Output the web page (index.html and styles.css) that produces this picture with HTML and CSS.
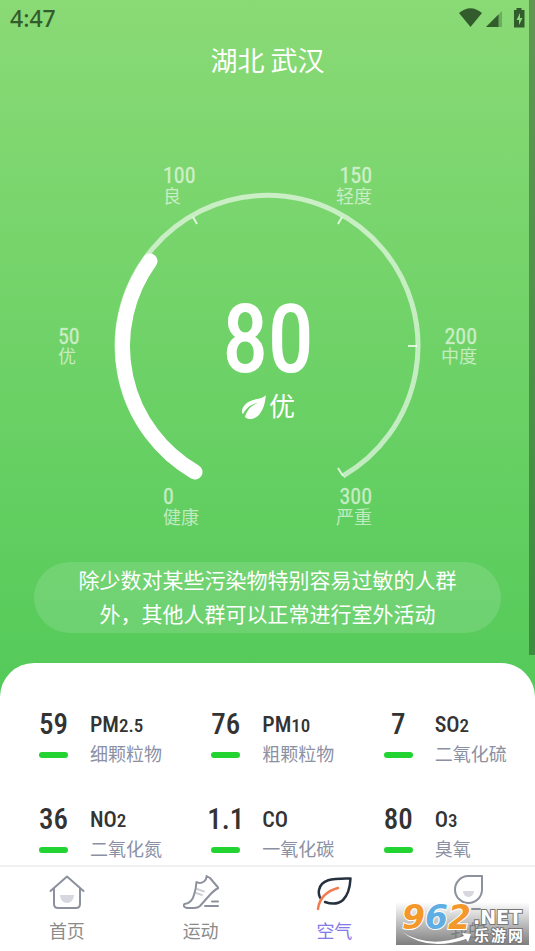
FILE: index.html
```html
<!DOCTYPE html>
<html lang="zh-CN">
<head>
<meta charset="utf-8">
<meta name="viewport" content="width=device-width, initial-scale=1">
<title>空气</title>
<link rel="stylesheet" href="styles.css">
</head>
<body>
<div class="app">
  <div class="status">
    <span class="clock">4:47</span>
    <svg class="status-icons" viewBox="0 0 70 24" aria-hidden="true">
      <path d="M0 6Q11.500-3.500 23 6L11.500 20Z" transform="translate(0 1)"/>
      <path opacity=".35" d="M27 21H43V5Z"/>
      <path d="M27 21H39.500V8.500Z"/>
      <path fill-rule="evenodd" d="M57.500 2H62.500V4H65.500V21.500H55V4H57.500ZM61 7L57.500 14H60V19L63.500 12H61Z"/>
    </svg>
  </div>
  <main class="main">
    <h1 class="city">湖北 武汉</h1>
    <svg class="gauge" viewBox="0 84 535 462" role="img" aria-label="空气质量 80 优">
      <path class="track" d="M192 476A150.500 150.500 0 1 1 343 476"/>
      <g class="ticks">
        <path d="M193 217L197 224M342 217L338 224M417 346H408M338 468L343 476"/>
      </g>
      <path class="progress" d="M195 472A145.500 145.500 0 0 1 150 261"/>
      <g class="scale">
        <text class="mark" x="163" y="183">100</text><text x="163" y="203">良</text>
        <text class="mark end" x="372" y="183">150</text><text class="end" x="372" y="203">轻度</text>
        <text class="mark" x="58" y="344">50</text><text x="58" y="363">优</text>
        <text class="mark end" x="477" y="344">200</text><text class="end" x="477" y="363">中度</text>
        <text class="mark" x="163" y="504">0</text><text x="163" y="524">健康</text>
        <text class="mark end" x="372" y="504">300</text><text class="end" x="372" y="524">严重</text>
      </g>
      <text class="reading" x="268" y="371">80</text>
      <g class="leaf" transform="translate(242 395)">
        <path d="M24 0C20 5 8 3 2 11C-1 15 0 18 1 19C4 14 8 9 16 8C9 10 5 15 3 22C7 26 15 24 19 17C23 11 23 5 24 0Z"/>
      </g>
      <text class="grade" x="269" y="416">优</text>
    </svg>
    <p class="tip">除少数对某些污染物特别容易过敏的人群外，其他人群可以正常进行室外活动</p>
  </main>
  <section class="sheet">
    <div class="item"><div class="value">59</div><div class="name">PM<small>2.5</small></div><i class="bar"></i><div class="label">细颗粒物</div></div>
    <div class="item"><div class="value">76</div><div class="name">PM<small>10</small></div><i class="bar"></i><div class="label">粗颗粒物</div></div>
    <div class="item"><div class="value">7</div><div class="name">SO<small>2</small></div><i class="bar"></i><div class="label">二氧化硫</div></div>
    <div class="item"><div class="value">36</div><div class="name">NO<small>2</small></div><i class="bar"></i><div class="label">二氧化氮</div></div>
    <div class="item"><div class="value">1.1</div><div class="name">CO</div><i class="bar"></i><div class="label">一氧化碳</div></div>
    <div class="item"><div class="value">80</div><div class="name">O<small>3</small></div><i class="bar"></i><div class="label">臭氧</div></div>
  </section>
  <nav class="nav">
    <a class="tab" href="#home">
      <svg class="icon" viewBox="0 0 36 36" aria-hidden="true"><path class="shade" d="M11 20H25A7 8 0 0 1 11 20Z"/><path d="M1.500 16L18 1.500L34.500 16M5 13.500V29Q5 33 9 33H27Q31 33 31 29V13.500"/></svg>
      <span>首页</span>
    </a>
    <a class="tab" href="#sport">
      <svg class="icon" viewBox="0 0 36 36" aria-hidden="true"><path class="shade-line" d="M14 14L21 16.500M13 18L19 20"/><path d="M13.500 7Q17 9 21 6.500Q24 4 23.500 1L27 3L35.500 13Q31 15 25 22L17 31Q15 33 11 33H4Q-1 31.500 1.500 29Q9 28 11 20Q13 14 13.500 7ZM22 31H35M29 26.500H35"/></svg>
      <span>运动</span>
    </a>
    <a class="tab active" href="#air" aria-current="page">
      <svg class="icon" viewBox="0 0 36 36" aria-hidden="true"><path class="dark" d="M5 24Q2 20 3 15C5 5 15 3 34.500 3.500C34 13 32 20 27 25Q20 31 9 27"/><path class="orange" d="M2 34Q4 18 22 13"/></svg>
      <span>空气</span>
    </a>
    <a class="tab" href="#mine">
      <svg class="icon" viewBox="0 0 36 36" aria-hidden="true"><path class="shade" d="M13 16H24A5.500 6 0 0 1 13 16Z"/><path d="M32 1H18A13.500 13.500 0 1 0 32 15V1ZM22 34H30"/></svg>
      <span>我的</span>
    </a>
  </nav>
  <div class="scroll-shade"></div>
  <svg class="watermark" viewBox="0 0 133 48" role="img" aria-label="962.NET 乐游网">
    <defs>
      <linearGradient id="shade" x1="0" y1="0" x2="0" y2="1"><stop offset="0" stop-color="#777" stop-opacity="0"/><stop offset="1" stop-color="#777" stop-opacity=".95"/></linearGradient>
    </defs>
    <path fill="url(#shade)" d="M0 5H133V48H0Z"/>
    <path class="swoosh" d="M6 35Q33 52 68 39L66 36L75 37L72 45L70 42Q32 55 6 35Z"/>
    <g class="digits"><text class="gold" x="6" y="32">9</text><text class="blue" x="29" y="32">6</text><text class="gold" x="52" y="32">2</text></g>
    <text class="net" x="77" y="27">.NET</text>
    <text class="site" x="78" y="44">乐</text><text class="site" x="95" y="44">游</text><text class="site" x="112" y="44">网</text>
  </svg>
</div>
</body>
</html>
```
FILE: styles.css
```css
* { box-sizing: border-box; }
body {
  margin: 0;
  font-family: Roboto, "Noto Sans CJK SC", sans-serif;
  background: #fff;
}
.app {
  position: relative;
  display: flex;
  flex-direction: column;
  min-height: 100vh;
  background: linear-gradient(#8ada76, #53ca59 700px);
}
.status {
  display: flex;
  justify-content: space-between;
  align-items: center;
  height: 36px;
  padding: 0 10px;
  color: #335c2c;
}
.clock { font-size: 23px; line-height: 36px; font-family: "Noto Sans", sans-serif; font-weight: 500; }
.status-icons { width: 70px; height: 24px; fill: #335c2c; margin-right: -4px; }
.main { display: flex; flex-direction: column; padding-bottom: 30px; }
.city {
  margin: 0;
  font-size: 27px;
  line-height: 48px;
  font-weight: 400;
  text-align: center;
  color: #fff;
  font-family: "Noto Sans CJK SC", sans-serif;
}
.gauge { display: block; width: 100%; fill: #fff; }
.track { fill: none; stroke: #fff; stroke-opacity: .6; stroke-width: 5; }
.ticks { fill: none; stroke: #fff; stroke-opacity: .75; stroke-width: 2; }
.progress { fill: none; stroke: #fff; stroke-width: 15; stroke-linecap: round; }
.scale { fill: #fff; fill-opacity: .6; font-size: 18px; font-family: "Noto Sans CJK SC", sans-serif; }
.mark, .reading, .value, .name { font-family: "Roboto Condensed", "Noto Sans CJK SC", sans-serif; }
.mark { font-size: 22px; font-weight: 400; stroke: #fff; stroke-opacity: .2; }
.end { text-anchor: end; }
.reading { font-size: 92px; font-weight: 400; text-anchor: middle; stroke: #fff; stroke-width: 2; stroke-linejoin: round; }
.grade { font-size: 26px; font-family: "Noto Sans CJK SC", sans-serif; }
.tip {
  margin: 16px 34px 0;
  padding: 0 40px 3px;
  border-radius: 36px;
  background: rgba(255, 255, 255, .13);
  color: #fff;
  font-size: 21px;
  line-height: 34px;
  text-align: center;
  font-family: "Noto Sans CJK SC", sans-serif;
}
.sheet {
  flex: 1;
  display: grid;
  grid-template-columns: repeat(3, 1fr);
  grid-auto-rows: 55px;
  row-gap: 40px;
  padding: 45px 9px 0;
  border-radius: 34px 34px 0 0;
  background: #fff;
}
.item {
  display: grid;
  grid-template-columns: 35px 1fr;
  grid-template-rows: 33px 24px;
  column-gap: 19px;
  align-items: center;
  padding-left: 27px;
  white-space: nowrap;
}
.value, .name { color: #333; line-height: 31px; font-weight: 500; }
.value { display: flex; justify-content: center; font-size: 29px; }
.name { font-size: 22px; }
.name small { font-size: 19px; }
.bar { justify-self: center; width: 29px; height: 6px; margin-top: 3px; border-radius: 3px; background: #23d331; }
.label { font-size: 18px; line-height: 24px; color: #8b90a3; font-family: "Noto Sans CJK SC", sans-serif; }
.nav {
  display: grid;
  grid-template-columns: repeat(4, 1fr);
  height: 86px;
  padding-top: 8px;
  border-top: 2px solid #f0f0f1;
  background: #fff;
}
.tab {
  display: flex;
  flex-direction: column;
  align-items: center;
  color: #8b8b8b;
  font-size: 18px;
  line-height: 38px;
  text-decoration: none;
  font-family: "Noto Sans CJK SC", sans-serif;
}
.active { color: #8379e8; }
.icon { width: 36px; height: 36px; fill: none; stroke: #8d919e; stroke-width: 2; stroke-linecap: round; stroke-linejoin: round; }
.icon .shade { fill: #d6d7df; stroke: none; }
.icon .shade-line { stroke: #d0d1d8; }
.icon .dark { stroke: #26313f; stroke-width: 2.5; }
.icon .orange { stroke: #f47b50; stroke-width: 2.5; }
.scroll-shade { position: absolute; top: 0; right: 0; width: 6px; height: 655px; background: rgba(0, 0, 0, .3); }
.watermark { position: absolute; right: 6px; bottom: 6px; width: 133px; height: 48px; }
.digits { font: italic 700 33px "DejaVu Sans", sans-serif; stroke: #fff; stroke-width: 2; paint-order: stroke; }
.gold { fill: #f5982b; }
.blue { fill: #5faee3; }
.swoosh { fill: #fff; }
.net { font: 700 19px "DejaVu Sans", sans-serif; fill: #fff; stroke: #777; stroke-width: 2; paint-order: stroke; }
.site { font: 700 15px "Noto Sans CJK SC", sans-serif; fill: #fff; stroke: #777; stroke-width: 2; paint-order: stroke; }
```
